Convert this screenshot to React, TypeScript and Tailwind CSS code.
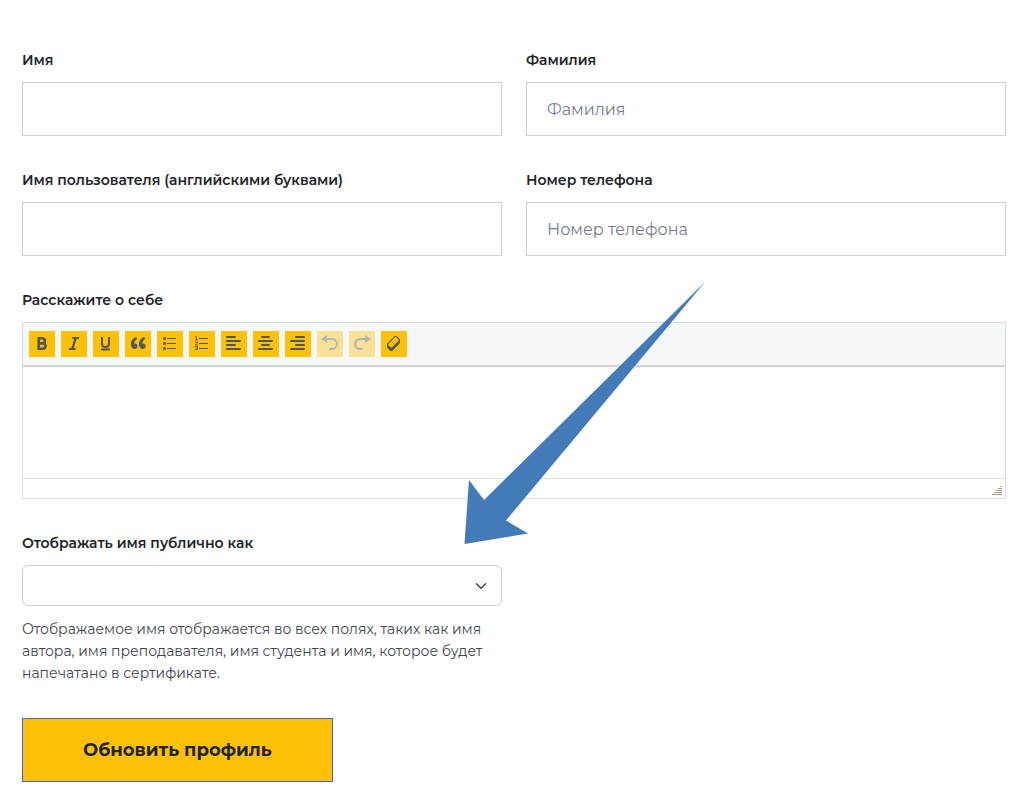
import { type ReactNode } from "react";
import { ChevronDown } from "lucide-react";

function Icon({ children }: { children: ReactNode }) {
  return (
    <svg viewBox="0 1 20 20" className="size-5" fill="currentColor" aria-hidden="true">
      {children}
    </svg>
  );
}

type Tool = { name: string; icon: ReactNode; disabled?: boolean };

const tools: Tool[] = [
  {
    name: "Полужирный",
    icon: (
      <path
        d="M6.700 5.200v10.600h3.600c2 0 3.200-1 3.200-2.700s-1.200-2.700-3.200-2.700H6.700h3.300c1.800 0 2.900-.9 2.900-2.600s-1.100-2.600-2.900-2.600z"
        fill="none"
        stroke="currentColor"
        strokeWidth="2.600"
      />
    ),
  },
  {
    name: "Курсив",
    icon: <path d="M14.780 6h-2.130l-2.800 9h2.120l-.62 2H4.600l.62-2h2.140l2.800-9H8.030l.62-2h6.750z" />,
  },
  {
    name: "Подчёркнутый",
    icon: <path d="M6 4v6.500c0 2.300 1.400 3.500 3.500 3.500s3.500-1.200 3.500-3.500V4M5 16.500h9" fill="none" stroke="currentColor" strokeWidth="2" />,
  },
  {
    name: "Цитата",
    icon: (
      <path d="M9.490 13.220c0-.74-.2-1.380-.61-1.900-.62-.78-1.830-.88-2.530-.72-.29-1.650 1.110-3.750 2.920-4.650L7.880 4c-2.730 1.300-5.420 4.280-4.960 8.050C3.210 14.430 4.590 16 6.540 16c.85 0 1.560-.25 2.120-.75s.83-1.180.83-2.030zm8.050 0c0-.74-.2-1.380-.61-1.900-.63-.78-1.830-.88-2.530-.72-.29-1.650 1.110-3.750 2.920-4.650L15.930 4c-2.730 1.300-5.410 4.280-4.950 8.050.29 2.380 1.660 3.950 3.610 3.950.85 0 1.560-.25 2.120-.75s.83-1.180.83-2.030z" />
    ),
  },
  {
    name: "Маркированный список",
    icon: (
      <>
        <circle cx="4.500" cy="5.500" r="1.500" />
        <circle cx="4.500" cy="10.500" r="1.500" />
        <circle cx="4.500" cy="15.500" r="1.500" />
        <path d="M7 5h9v1H7zM7 10h9v1H7zM7 15h9v1H7z" />
      </>
    ),
  },
  {
    name: "Нумерованный список",
    icon: (
      <>
        <path d="M7 5h9v1H7zM7 10h9v1H7zM7 15h9v1H7z" />
        <path
          d="M3 4.300l1.500-.8v3.500M3 7h3M3 9h2.500v1.300L3 12h3M3 13.500h2.500v3H3M3.500 15h2"
          fill="none"
          stroke="currentColor"
          strokeWidth="0.800"
        />
      </>
    ),
  },
  {
    name: "По левому краю",
    icon: <path d="M3 4h8M3 8h13M3 12h8M3 16h13" stroke="currentColor" strokeWidth="2" strokeLinecap="round" />,
  },
  {
    name: "По центру",
    icon: <path d="M6 4h7M3 8h13M6 12h7M3 16h13" stroke="currentColor" strokeWidth="2" strokeLinecap="round" />,
  },
  {
    name: "По правому краю",
    icon: <path d="M8 4h8M3 8h13M8 12h8M3 16h13" stroke="currentColor" strokeWidth="2" strokeLinecap="round" />,
  },
  {
    name: "Отменить",
    disabled: true,
    icon: <path d="M12 5H7V2L1 6l6 4V7h5c2.200 0 4 1.800 4 4s-1.800 4-4 4H9v2h3c3.300 0 6-2.700 6-6s-2.700-6-6-6z" />,
  },
  {
    name: "Повторить",
    disabled: true,
    icon: <path d="M8 5h5V2l6 4-6 4V7H8c-2.200 0-4 1.800-4 4s1.800 4 4 4h3v2H8c-3.300 0-6-2.700-6-6s2.700-6 6-6z" />,
  },
  {
    name: "Очистить форматирование",
    icon: (
      <path d="M14.290 4.590l1.100 1.110c.41.4.61.94.61 1.470v2.120c0 .53-.2 1.070-.61 1.470l-6.630 6.630c-.4.41-.94.61-1.470.61s-1.070-.2-1.470-.61l-1.110-1.100-1.100-1.110c-.41-.4-.61-.94-.61-1.470v-2.120c0-.54.2-1.070.61-1.480l6.630-6.620c.4-.41.94-.61 1.470-.61s1.060.2 1.470.61zm-6.210 9.700l6.420-6.420c.39-.39.39-1.030 0-1.430L12.360 4.300c-.19-.19-.45-.29-.72-.29s-.52.1-.71.29l-6.420 6.420c-.39.4-.39 1.040 0 1.430l2.140 2.140c.38.38 1.040.38 1.430 0z" />
    ),
  },
];

const labelClass = "text-sm leading-5 font-semibold text-[#212327]";

function Field({ id, label, placeholder, type = "text" }: { id: string; label: string; placeholder?: string; type?: string }) {
  return (
    <div className="flex flex-col gap-3">
      <label htmlFor={id} className={labelClass}>
        {label}
      </label>
      <input
        id={id}
        type={type}
        placeholder={placeholder}
        className="h-[54px] w-full border border-[#cdcfd5] bg-white px-5 text-base text-[#41454f] placeholder:text-[#757c8e]"
      />
    </div>
  );
}

function Editor() {
  return (
    <div className="flex flex-col gap-3">
      <label htmlFor="bio" className={labelClass}>
        Расскажите о себе
      </label>
      <div className="border border-[#dadbdd]">
        <div
          role="toolbar"
          aria-label="Форматирование"
          className="relative flex flex-wrap gap-1.5 border-b border-[#d8d9db] bg-[#f6f7f7] px-1.5 py-2 shadow-[0_1px_1px_#d0d1d3]"
        >
          {tools.map((tool) => (
            <button
              key={tool.name}
              type="button"
              aria-label={tool.name}
              disabled={tool.disabled}
              className="flex size-[26px] items-center justify-center bg-[#ffc107] text-[#50575e] disabled:opacity-40"
            >
              <Icon>{tool.icon}</Icon>
            </button>
          ))}
        </div>
        <textarea id="bio" className="block h-28 w-full resize-none bg-white p-2.5 text-base text-[#41454f] outline-none" />
        <div className="flex h-5 items-end justify-end border-t border-[#dadbdd] px-[3px] pb-[3px]">
          <svg viewBox="0 0 10 10" className="size-2.5" stroke="#b39b84" aria-hidden="true">
            <path d="M8 1.500h2M6 3.500h4M4 5.500h6M2 7.500h8M0 9.500h10" />
          </svg>
        </div>
      </div>
    </div>
  );
}

function Arrow() {
  return (
    <svg
      viewBox="0 0 241 262"
      className="pointer-events-none absolute top-[282px] left-[464px] w-[241px]"
      fill="#427bb8"
      aria-hidden="true"
    >
      <path d="M241 0L20 218L5 198L.500 262L64 251.500L42 238.500Z" />
    </svg>
  );
}

export default function App() {
  return (
    <main className="relative bg-white pt-[50px] pr-[19px] pb-6 pl-[22px] font-[Montserrat,Inter,sans-serif]">
      <form className="flex flex-col gap-[34px]">
        <div className="grid grid-cols-2 gap-x-6 gap-y-[34px]">
          <Field id="first-name" label="Имя" />
          <Field id="last-name" label="Фамилия" placeholder="Фамилия" />
          <Field id="username" label="Имя пользователя (английскими буквами)" />
          <Field id="phone" label="Номер телефона" placeholder="Номер телефона" type="tel" />
        </div>

        <Editor />

        <div className="grid grid-cols-2 gap-x-6">
          <div className="flex flex-col gap-3">
            <label htmlFor="display-name" className={labelClass}>
              Отображать имя публично как
            </label>
            <div className="relative">
              <select
                id="display-name"
                className="block h-[41px] w-full appearance-none rounded-md border border-[#cdcfd5] bg-white pr-10 pl-4 text-base text-[#41454f]"
              >
                <option value="" />
              </select>
              <ChevronDown className="pointer-events-none absolute top-3 right-3 size-[18px] text-[#41454f]" />
            </div>
            <p className="text-sm leading-[22px] text-[#41454f]">
              Отображаемое имя отображается во всех полях, таких как имя автора, имя преподавателя, имя студента и имя, которое будет
              напечатано в сертификате.
            </p>
          </div>
        </div>

        <button
          type="submit"
          className="h-16 self-start border border-[#3e64de] bg-[#ffc107] px-[60px] text-lg font-bold text-[#212327]"
        >
          Обновить профиль
        </button>
      </form>
      <Arrow />
    </main>
  );
}
